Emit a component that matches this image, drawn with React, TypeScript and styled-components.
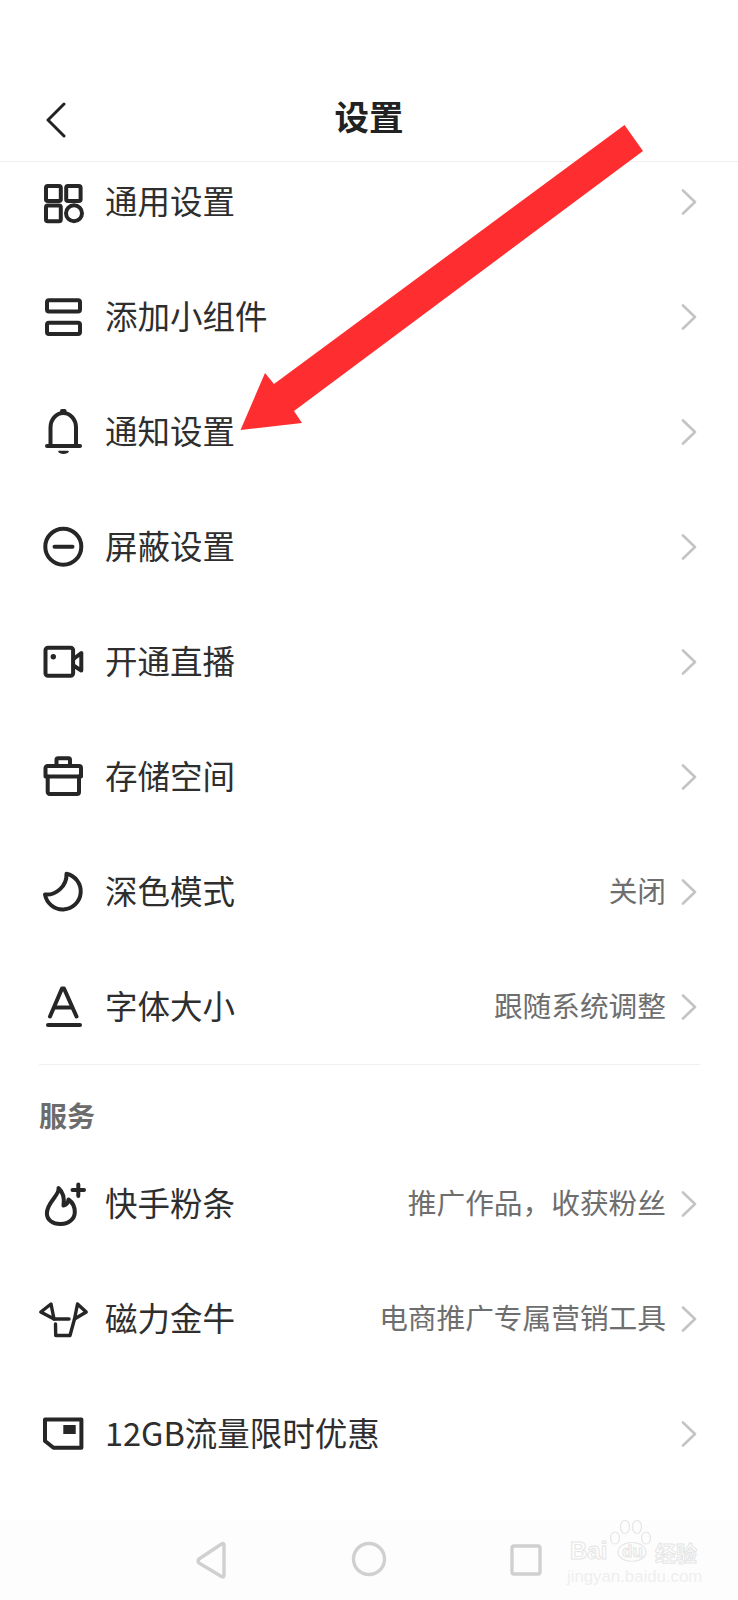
import React from "react";
import styled, { createGlobalStyle } from "styled-components";

const Global = createGlobalStyle`
  html, body { margin: 0; padding: 0; background: #fff; }
  * { box-sizing: border-box; }
`;
const Page = styled.div`
  position: relative; width: 738px; height: 1600px; display: flex; flex-direction: column;
  background: #fff; overflow: hidden; color: #2a2a2a;
  font-family: "Noto Sans CJK SC", "Noto Sans", sans-serif;
`;
const Header = styled.header`
  height: 162px; flex: none; padding-top: 88px; display: grid; grid-template-columns: 1fr auto 1fr;
  align-items: center; border-bottom: 1px solid #eeeeee; padding-bottom: 6px;
`;
const BackIcon = styled.svg`
  width: 22px; height: 36px; margin: 0 0 4px 45px; display: block;
  fill: none; stroke: #222; stroke-width: 3; stroke-linecap: round; stroke-linejoin: round;
`;
const Title = styled.h1`
  margin: 0 0 14px; font-size: 34.5px; line-height: 46px; font-weight: 700; color: #222;
`;
const Scroller = styled.main`
  flex: 1; overflow: hidden; display: flex; flex-direction: column;
`;
const Rows = styled.div`
  display: flex; flex-direction: column; flex: none;
`;
const ScrolledRows = styled(Rows)`
  margin-top: -18px;
`;
const Row = styled.div`
  height: 115px; display: flex; align-items: center; padding: 0 41px 0 44px; flex: none;
`;
const Icon = styled.svg`
  width: 40px; height: 40px; flex: none; overflow: visible; margin-right: 21px;
  fill: none; stroke: #262626; stroke-width: 4; stroke-linejoin: round; stroke-linecap: round;
`;
const Label = styled.span`
  flex: 1; font-size: 32.5px; line-height: 44px; padding-bottom: 4px; color: #2e2e2e; white-space: nowrap;
`;
const Hint = styled.span`
  font-size: 28.7px; line-height: 40px; padding-bottom: 4px; color: #6e6e6e; margin-right: 15px; white-space: nowrap;
`;
const Chevron = styled.svg`
  width: 16px; height: 26px; flex: none; fill: none; stroke: #c4c4c4; stroke-width: 2.6;
  stroke-linecap: round; stroke-linejoin: round;
`;
const Divider = styled.hr`
  margin: 0 38px 0 39px; height: 1px; border: 0; background: #efefef; flex: none;
`;
const SectionTitle = styled.h2`
  margin: 0; height: 81px; padding: 18px 39px 0; display: flex; align-items: center; flex: none;
  font-size: 28px; font-weight: 700; color: #6c6c6c;
`;
const NavBar = styled.nav`
  position: relative; height: 80px; flex: none; background: #fdfdfd;
`;
const NavIcons = styled.svg`
  display: block; width: 738px; height: 80px; fill: none; stroke: #d0d0d0; stroke-width: 3.4;
  stroke-linejoin: round;
`;
const Arrow = styled.svg`
  position: absolute; left: 0; top: 0; width: 738px; height: 1600px; pointer-events: none;
`;
const Watermark = styled.div`
  position: absolute; left: 566px; top: 1520px; width: 140px; height: 66px; color: transparent;
  font-family: "Liberation Sans", "Noto Sans CJK SC", sans-serif;
`;
const WatermarkPaw = styled.svg`
  position: absolute; left: 44px; top: 0; width: 46px; height: 44px; fill: none; stroke: #e6e6e6; stroke-width: 1.2;
`;
const WatermarkBrand = styled.span`
  position: absolute; left: 4px; top: 17px; font-size: 24px; line-height: 28px; font-weight: 700;
  -webkit-text-stroke: 1px #e6e6e6; white-space: nowrap;
`;
const WatermarkDu = styled(WatermarkBrand)`
  left: 56px; top: 22px; font-size: 17px; line-height: 20px;
`;
const WatermarkCn = styled(WatermarkBrand)`
  left: 89px; top: 19px; font-size: 21px; line-height: 26px; font-family: "Noto Sans CJK SC", sans-serif;
`;
const WatermarkUrl = styled.span`
  position: absolute; left: 1px; top: 47px; font-size: 16.8px; line-height: 20px; color: #efefef; white-space: nowrap;
`;

const Arrowhead = () => (
  <Chevron viewBox="0 0 16 26"><path d="M2 1.5 L14 13 L2 24.5" /></Chevron>
);

const icons: Record<string, React.ReactNode> = {
  grid: (
    <>
      <rect x="2" y="4" width="14.8" height="15" rx="1.8" />
      <rect x="22.2" y="4" width="14.4" height="15" rx="1.8" />
      <rect x="2" y="23.6" width="14.8" height="15.6" rx="1.8" />
      <circle cx="30" cy="31.3" r="8" />
    </>
  ),
  stack: (
    <>
      <rect x="3" y="3.2" width="33" height="11.2" rx="2" />
      <rect x="3" y="25.7" width="33" height="11.4" rx="2" />
    </>
  ),
  bell: (
    <>
      <path d="M6.5 34 V15.5 C6.5 7 12.5 1 19.3 1 C26 1 32 7 32 15.5 V34" />
      <path d="M3 34 H36" />
      <path d="M18 -1 H20.6" />
      <path d="M15 39.5 H24 C23 41.6 16 41.6 15 39.5 Z" fill="#262626" strokeWidth="1.6" />
    </>
  ),
  block: (
    <>
      <circle cx="19.3" cy="19.7" r="18" />
      <path d="M10.5 19.7 H28.5" />
    </>
  ),
  camera: (
    <>
      <rect x="1.5" y="5.7" width="27.6" height="28" rx="2.5" />
      <circle cx="9.3" cy="14.7" r="2.7" fill="#262626" stroke="none" />
      <path d="M29.5 17 L37.3 11 V28.6 L29.5 23.5" />
    </>
  ),
  box: (
    <>
      <path d="M12.5 9 V2.7 A1.5 1.5 0 0 1 14 1.2 H24.5 A1.5 1.5 0 0 1 26 2.7 V9" />
      <path d="M1.5 19.5 V11 A2 2 0 0 1 3.5 9 H35 A2 2 0 0 1 37 11 V19.5 M1.5 19.5 H37" />
      <path d="M3.7 19.5 V35 A2 2 0 0 0 5.7 37 H33 A2 2 0 0 0 35 35 V19.5" />
    </>
  ),
  moon: <path d="M22.5 1.8 A18 18 0 1 1 1 22.5 C12 23.5 23 14 22.5 1.8 Z" />,
  font: (
    <>
      <path d="M6 29.5 L18 1.5 H20 L32.5 29.5" />
      <path d="M10.5 20.5 H28" />
      <path d="M4 38 H36" />
    </>
  ),
  flame: (
    <>
      <path d="M14.5 4 C16 11 3 18 2.9 29 C2.7 36 9 40.3 16.7 40.1 C25 39.9 30.8 35 30.8 28 C30.8 23 28 18 24.5 15.5 C24 19 22 21 19.5 21.5 C20.5 15 19 8 14.5 4 Z" />
      <path d="M34.3 0.5 V12 M28.5 6 H40" />
    </>
  ),
  bull: (
    <g strokeWidth="3.4">
      <path d="M-3.2 13 L7 5 L10 20 Z" />
      <path d="M10 20 H25" />
      <path d="M11.5 25 L11.7 36.5 H26 L30.5 20" />
      <path d="M30.5 20 L33.5 5 L42.2 13 Z" />
    </g>
  ),
  sim: (
    <>
      <path d="M1 5.5 H37.4 V33.7 H9.5 L1 27 Z" />
      <rect x="19.3" y="11" width="12.4" height="9" fill="#262626" stroke="none" />
    </>
  ),
};

type Item = { icon: string; label: string; hint?: string };
const general: Item[] = [
  { icon: "grid", label: "通用设置" },
  { icon: "stack", label: "添加小组件" },
  { icon: "bell", label: "通知设置" },
  { icon: "block", label: "屏蔽设置" },
  { icon: "camera", label: "开通直播" },
  { icon: "box", label: "存储空间" },
  { icon: "moon", label: "深色模式", hint: "关闭" },
  { icon: "font", label: "字体大小", hint: "跟随系统调整" },
];
const services: Item[] = [
  { icon: "flame", label: "快手粉条", hint: "推广作品，收获粉丝" },
  { icon: "bull", label: "磁力金牛", hint: "电商推广专属营销工具" },
  { icon: "sim", label: "12GB流量限时优惠" },
];

const SettingRow = ({ icon, label, hint }: Item) => (
  <Row>
    <Icon viewBox="0 0 40 40">{icons[icon]}</Icon>
    <Label>{label}</Label>
    {hint && <Hint>{hint}</Hint>}
    <Arrowhead />
  </Row>
);

export default function App() {
  return (
    <Page>
      <Global />
      <Header>
        <BackIcon viewBox="0 0 22 36"><path d="M19 2 L3 18 L19 34" /></BackIcon>
        <Title>设置</Title>
        <span />
      </Header>
      <Scroller>
        <ScrolledRows>
          {general.map((it) => <SettingRow key={it.label} {...it} />)}
        </ScrolledRows>
        <Divider />
        <SectionTitle>服务</SectionTitle>
        <Rows>
          {services.map((it) => <SettingRow key={it.label} {...it} />)}
        </Rows>
      </Scroller>
      <NavBar>
        <NavIcons viewBox="0 0 738 80">
          <path d="M224 25 V55 Q224 58 221.5 56.5 L199 43 Q197 41 199 39 L221.5 24 Q224 22.5 224 25 Z" />
          <circle cx="369" cy="39" r="15.5" />
          <rect x="512" y="26" width="28" height="28" rx="2" />
        </NavIcons>
      </NavBar>
      <Watermark>
        <WatermarkBrand>Bai</WatermarkBrand>
        <WatermarkPaw viewBox="0 0 46 44">
          <ellipse cx="22" cy="32" rx="14" ry="9.5" />
          <ellipse cx="5" cy="18" rx="4.5" ry="6" />
          <ellipse cx="15" cy="7" rx="4.5" ry="6.5" />
          <ellipse cx="27" cy="7" rx="4.5" ry="6.5" />
          <ellipse cx="36" cy="18" rx="4.5" ry="6" />
        </WatermarkPaw>
        <WatermarkDu>du</WatermarkDu>
        <WatermarkCn>经验</WatermarkCn>
        <WatermarkUrl>jingyan.baidu.com</WatermarkUrl>
      </Watermark>
      <Arrow viewBox="0 0 738 1600">
        <path fill="#fe2e30" d="M624.5 125 L643 151 L294 411 L302 423 L240.5 430 L265 373 L274 384 Z" />
      </Arrow>
    </Page>
  );
}
